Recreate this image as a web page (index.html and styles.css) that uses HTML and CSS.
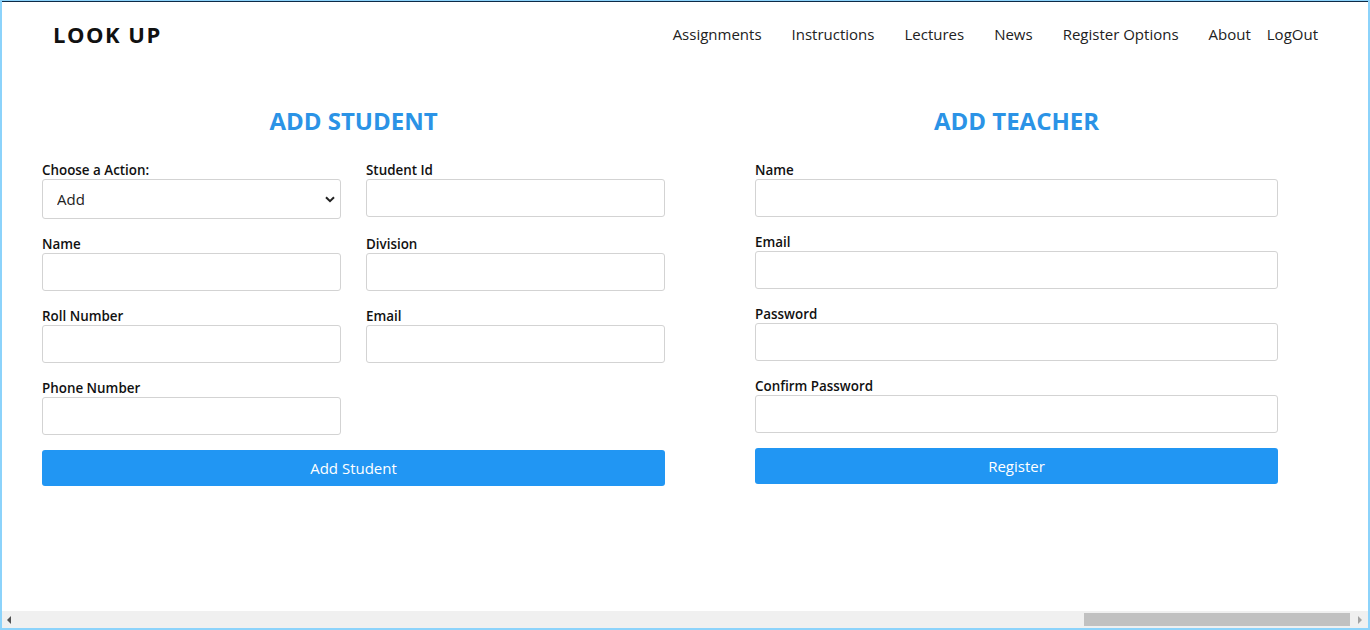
FILE: index.html
```html
<!DOCTYPE html>
<html lang="en">
<head>
<meta charset="utf-8">
<title>LOOK UP</title>
<link rel="stylesheet" href="styles.css">
</head>
<body>
<div class="frame">
  <div class="viewport">
    <header class="topbar">
      <div class="brand">LOOK UP</div>
      <nav class="nav">
        <a href="#">Assignments</a>
        <a href="#">Instructions</a>
        <a href="#">Lectures</a>
        <a href="#">News</a>
        <a href="#">Register Options</a>
        <a href="#">About</a>
        <a href="#" class="logout">LogOut</a>
      </nav>
    </header>
    <main class="forms">
      <section class="panel panel-student">
        <h2 class="panel-title">ADD STUDENT</h2>
        <div class="grid">
          <div class="field">
            <label>Choose a Action:</label>
            <div class="select-wrap">
              <select class="select"><option>Add</option><option>Update</option><option>Delete</option></select>
              <svg class="chev" width="10" height="7" viewBox="0 0 10 7"><path d="M1 1.2 L5 5.2 L9 1.2" fill="none" stroke="#222" stroke-width="2"/></svg>
            </div>
          </div>
          <div class="field"><label>Student Id</label><input class="input" type="text"></div>
          <div class="field"><label>Name</label><input class="input" type="text"></div>
          <div class="field"><label>Division</label><input class="input" type="text"></div>
          <div class="field"><label>Roll Number</label><input class="input" type="text"></div>
          <div class="field"><label>Email</label><input class="input" type="text"></div>
          <div class="field"><label>Phone Number</label><input class="input" type="text"></div>
        </div>
        <button class="btn">Add Student</button>
      </section>
      <section class="panel panel-teacher">
        <h2 class="panel-title">ADD TEACHER</h2>
        <div class="stack">
          <div class="field"><label>Name</label><input class="input" type="text"></div>
          <div class="field"><label>Email</label><input class="input" type="email"></div>
          <div class="field"><label>Password</label><input class="input" type="password"></div>
          <div class="field"><label>Confirm Password</label><input class="input" type="password"></div>
        </div>
        <button class="btn">Register</button>
      </section>
    </main>
  </div>
  <div class="hscroll">
    <span class="arrow arrow-left"></span>
    <div class="track"><div class="thumb"></div></div>
    <span class="arrow arrow-right"></span>
  </div>
</div>
</body>
</html>
```
FILE: styles.css
```css
* { box-sizing: border-box; }
html, body { margin: 0; padding: 0; }
body {
  font-family: "Open Sans", "Noto Sans", Arial, sans-serif;
  color: #212529;
  background: #fff;
}
.frame {
  width: 1370px;
  height: 630px;
  border: 2px solid #8cd3fb;
  border-top-width: 1px;
  display: flex;
  flex-direction: column;
  overflow: hidden;
}
.viewport {
  flex: 1;
  border-top: 1px solid #0e2b47;
  overflow: hidden;
}
.topbar {
  height: 64px;
  display: flex;
  align-items: center;
  justify-content: space-between;
  padding: 0 50px 0 51px;
}
.brand {
  font-size: 22px;
  font-weight: 700;
  letter-spacing: 1.5px;
  color: #111;
}
.nav {
  display: flex;
  gap: 30px;
  font-size: 15px;
}
.nav a {
  color: #222;
  text-decoration: none;
}
.nav .logout { margin-left: -14px; }
.forms {
  display: flex;
  gap: 90px;
  padding: 40px 0 0 40px;
}
.panel-student { width: 623px; }
.panel-teacher { width: 523px; }
.panel-title {
  margin: 0 0 26px;
  text-align: center;
  font-size: 24px;
  line-height: 29px;
  font-weight: 700;
  color: #2b93e6;
}
.grid {
  display: grid;
  grid-template-columns: 299px 299px;
  column-gap: 25px;
  row-gap: 16px;
}
.stack {
  display: flex;
  flex-direction: column;
  gap: 16px;
}
.field label {
  display: block;
  font-size: 13.4px;
  line-height: 16px;
  padding-top: 1px;
  margin-bottom: 1px;
  font-weight: 600;
  color: #111;
}
.input {
  display: block;
  width: 100%;
  height: 38px;
  border: 1px solid #d3d3d3;
  border-radius: 3px;
  padding: 0 12px;
  font: inherit;
  background: #fff;
}
.select-wrap { position: relative; }
.select {
  display: block;
  width: 100%;
  height: 40px;
  border: 1px solid #d3d3d3;
  border-radius: 3px;
  padding: 0 14px;
  font-family: inherit;
  font-size: 15px;
  color: #222;
  background: #fff;
  appearance: none;
  -webkit-appearance: none;
}
.chev {
  position: absolute;
  right: 6px;
  top: 17px;
  pointer-events: none;
}
.btn {
  display: block;
  width: 100%;
  height: 36px;
  margin-top: 15px;
  border: 0;
  border-radius: 3px;
  background: #2196f3;
  color: #fff;
  font-family: inherit;
  font-size: 15px;
}
.hscroll {
  height: 17px;
  background: #f0f0f0;
  display: flex;
  align-items: center;
}
.arrow {
  width: 0;
  height: 0;
  border-top: 4px solid transparent;
  border-bottom: 4px solid transparent;
}
.arrow-left {
  margin: 0 6px 0 5px;
  border-right: 4px solid #505050;
}
.arrow-right {
  margin: 0 6px 0 6px;
  border-left: 4px solid #a3a3a3;
}
.track {
  flex: 1;
  height: 13px;
  display: flex;
  justify-content: flex-end;
  padding-right: 2px;
}
.thumb {
  width: 266px;
  height: 13px;
  background: #c1c1c1;
}
```
